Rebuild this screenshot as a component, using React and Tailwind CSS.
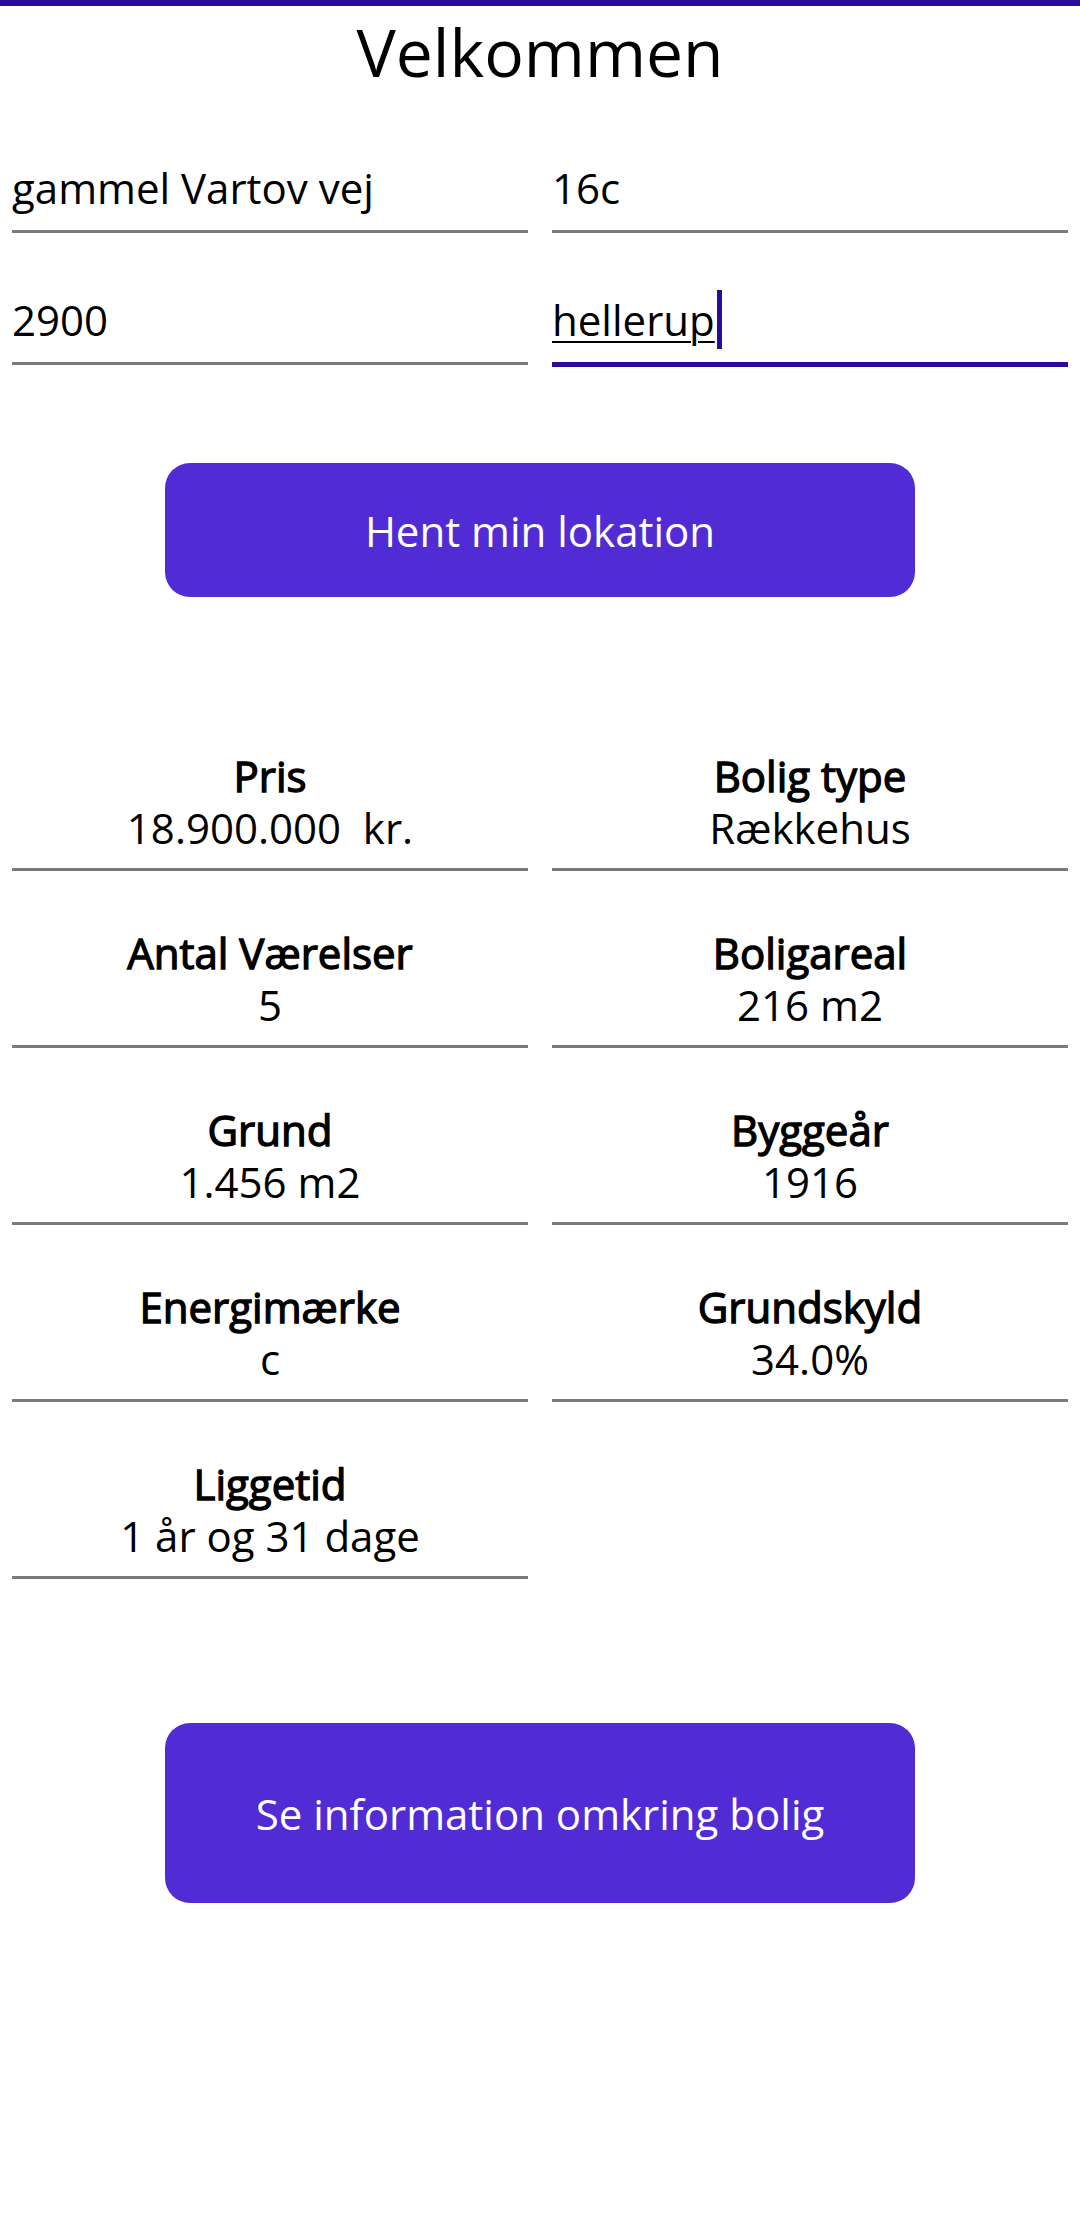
import React from "react";

const rows = [
  ["Pris", "18.900.000  kr."],
  ["Bolig type", "Rækkehus"],
  ["Antal Værelser", "5"],
  ["Boligareal", "216 m2"],
  ["Grund", "1.456 m2"],
  ["Byggeår", "1916"],
  ["Energimærke", "c"],
  ["Grundskyld", "34.0%"],
  ["Liggetid", "1 år og 31 dage"],
];

function Entry({ value, focused }) {
  return (
    <div className="pt-[61px]">
      <div className="text-[42px] leading-[52px] text-black whitespace-pre">
        {focused ? (
          <span className="relative underline decoration-2 underline-offset-[5px] decoration-black">
            {value}
            <span className="absolute left-full top-[-1px] ml-[2px] h-[59px] w-[5px] bg-[#2B0B98]" />
          </span>
        ) : (
          value
        )}
      </div>
      <div className="pb-[16px]" />
      <div className={focused ? "h-[5px] bg-[#2B0B98]" : "h-[3px] bg-[#7a7a7a]"} />
    </div>
  );
}

function Info({ title, value }) {
  return (
    <div className="pt-[56px] text-center text-black">
      <div className="text-[42px] leading-[52px] font-normal [-webkit-text-stroke:1.3px_#000]">{title}</div>
      <div className="text-[42px] leading-[52px] whitespace-pre">{value}</div>
      <div className="pb-[14px]" />
      <div className="h-[3px] bg-[#7a7a7a]" />
    </div>
  );
}

export default function App() {
  return (
    <div className="w-[1080px] min-h-[2238px] bg-white font-['Open_Sans',sans-serif]">
      <div className="h-[6px] bg-[#2B0B98]" />
      <h1 className="text-center text-[66px] leading-[normal] font-normal text-black">
        Velkommen
      </h1>
      <div className="mt-[5px] grid grid-cols-2 items-start gap-x-[24px] px-[12px]">
        <Entry value="gammel Vartov vej" />
        <Entry value="16c" />
        <Entry value="2900" />
        <Entry value="hellerup" focused />
      </div>
      <div className="mt-[96px] flex justify-center">
        <button className="flex h-[134px] w-[750px] items-center justify-center rounded-[25px] bg-[#512BD4] text-[42px] text-white">
          Hent min lokation
        </button>
      </div>
      <div className="mt-[97px] grid grid-cols-2 gap-x-[24px] px-[12px]">
        {rows.map(([t, v]) => (
          <Info key={t} title={t} value={v} />
        ))}
      </div>
      <div className="mt-[144px] flex justify-center">
        <button className="flex h-[180px] w-[750px] items-center justify-center rounded-[25px] bg-[#512BD4] text-[42px] text-white">
          Se information omkring bolig
        </button>
      </div>
    </div>
  );
}
